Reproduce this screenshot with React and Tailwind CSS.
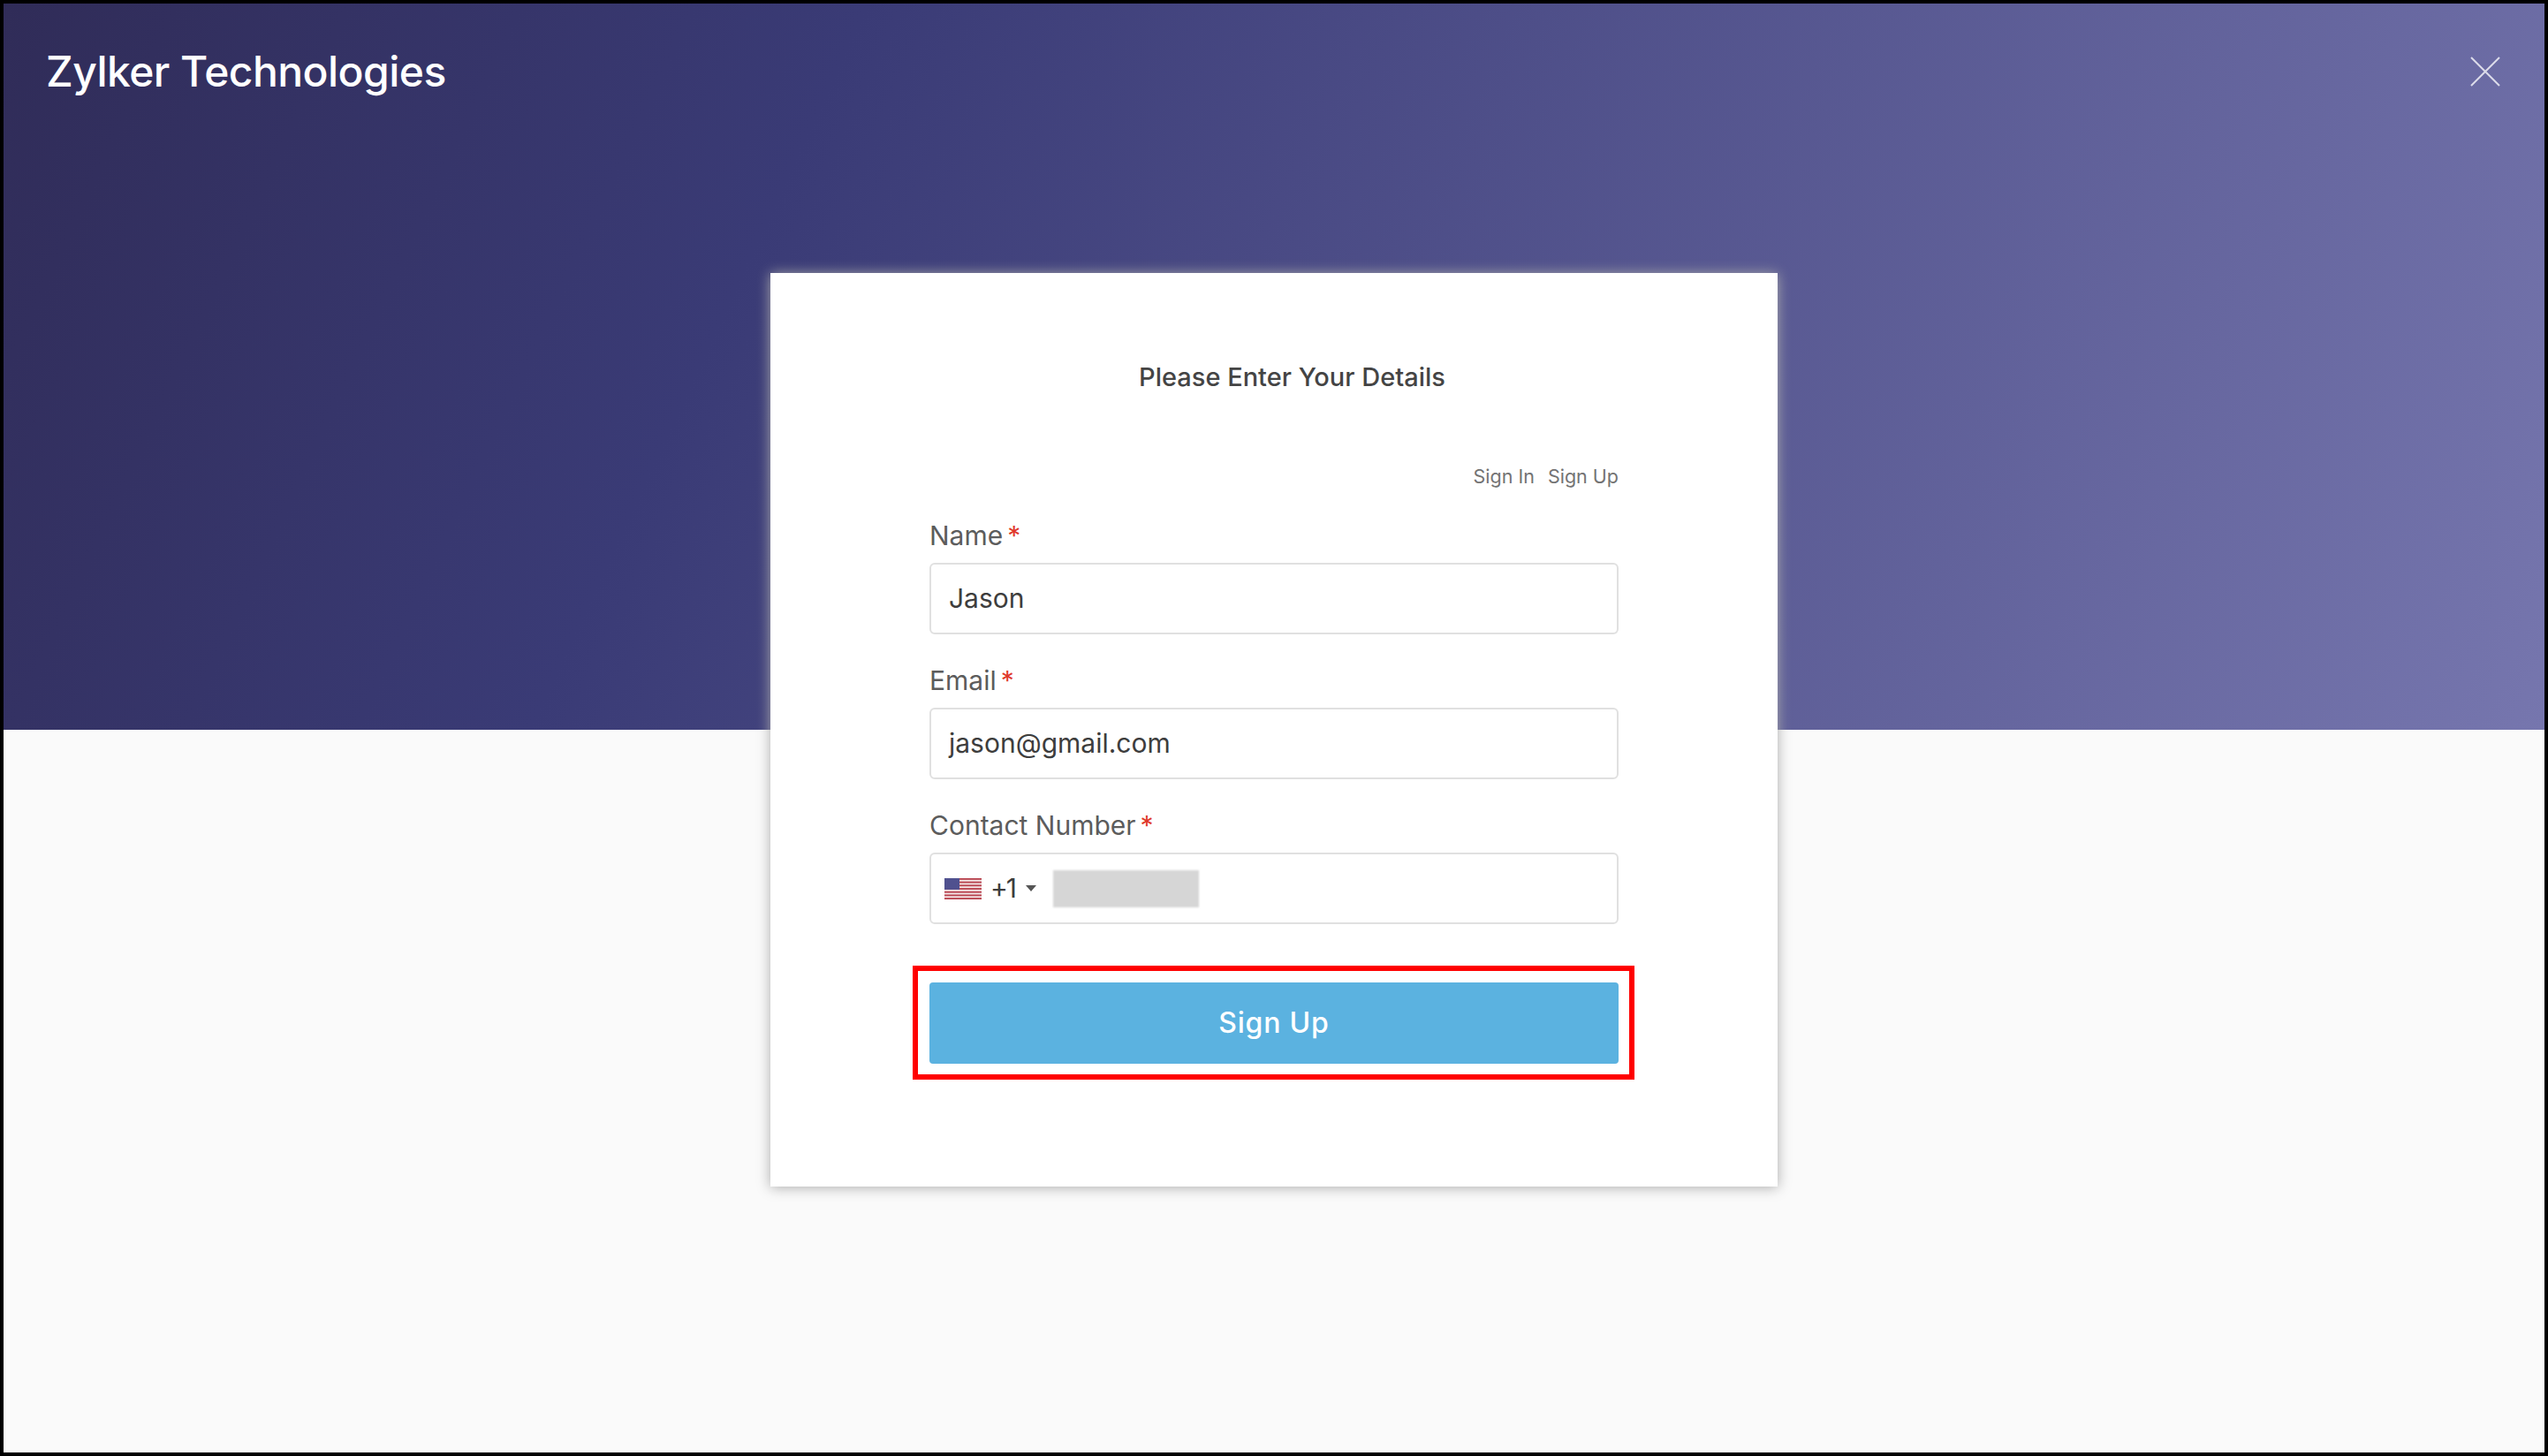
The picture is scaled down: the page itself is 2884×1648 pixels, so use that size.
const fieldClass =
  "flex h-[81px] w-full items-center rounded-[6px] border-2 border-[#e0e0e0] bg-white px-[20px] text-[30px] text-[#3d3d3d]";

function Label({ text }) {
  return (
    <div className="mb-[9px] h-[43px] text-[30px] leading-[43px] text-[#5c5c5c]">
      {text}
      <span className="ml-[5px] text-[#e0392b]">*</span>
    </div>
  );
}

function UsFlag() {
  const stripes = [0, 2, 4, 6, 8, 10, 12];
  return (
    <svg width="42" height="24" viewBox="0 0 42 13" preserveAspectRatio="none" className="shrink-0">
      <rect width="42" height="13" fill="#f4e6e6" />
      {stripes.map((y) => (
        <rect key={y} y={y} width="42" height="1" fill="#b8434f" />
      ))}
      <rect width="17" height="7" fill="#50518f" />
    </svg>
  );
}

export default function App() {
  return (
    <div className="box-border flex h-screen flex-col overflow-hidden border-4 border-black bg-[#fafafa] font-['Inter',sans-serif]">
      {/* Hero */}
      <div className="flex h-[822px] shrink-0 items-start justify-between bg-[linear-gradient(115deg,#302c58_0%,#3a3b76_30%,#7676ae_100%)] pl-[48px] pr-[50px] pt-[49px]">
        <h1 className="text-[48px] font-medium leading-[56px] tracking-[-0.55px] text-white">Zylker Technologies</h1>
        <svg width="34" height="34" viewBox="0 0 34 34" className="mt-[11px] text-[#dcdcea]">
          <path d="M1 1L33 33M33 1L1 33" stroke="currentColor" strokeWidth="2" />
        </svg>
      </div>

      {/* Form card */}
      <div className="flex-1">
        <div className="relative z-10 mx-auto -mt-[517px] box-border h-[1034px] w-[1140px] bg-white px-[180px] pt-[94px] shadow-[0_1px_14px_rgba(170,170,170,1)]">
          <h2 className="h-[48px] pl-[41px] text-center text-[29px] font-medium leading-[48px] text-[#444444]">
            Please Enter Your Details
          </h2>
          <div className="mt-[73px] flex h-[30px] justify-end gap-[15px] text-[21.5px] leading-[30px] text-[#737373]">
            <span>Sign In</span>
            <span>Sign Up</span>
          </div>
          <div className="mt-[31px]">
            <Label text="Name" />
            <div className={fieldClass}>Jason</div>
          </div>
          <div className="mt-[31px]">
            <Label text="Email" />
            <div className={fieldClass}>jason@gmail.com</div>
          </div>
          <div className="mt-[31px]">
            <Label text="Contact Number" />
            <div className={`${fieldClass} !pl-[15px]`}>
              <UsFlag />
              <span className="ml-[10px] tracking-[-2px]">+1</span>
              <span className="ml-[12px] h-0 w-0 border-x-[6px] border-t-[7px] border-x-transparent border-t-[#555555]" />
              <div className="ml-[19px] h-[42px] w-[165px] bg-[#d6d6d6] blur-[1px]" />
            </div>
          </div>
          {/* Red annotation round the button */}
          <div className="-ml-[19px] -mr-[18px] mt-[47px] border-[6px] border-[#ff0000] pb-[12px] pl-[13px] pr-[12px] pt-[13px]">
            <button
              type="button"
              className="block h-[92px] w-full rounded-[4px] bg-[#5bb2e0] text-[32px] font-medium tracking-[0.8px] text-white"
            >
              Sign Up
            </button>
          </div>
        </div>
      </div>
    </div>
  );
}
